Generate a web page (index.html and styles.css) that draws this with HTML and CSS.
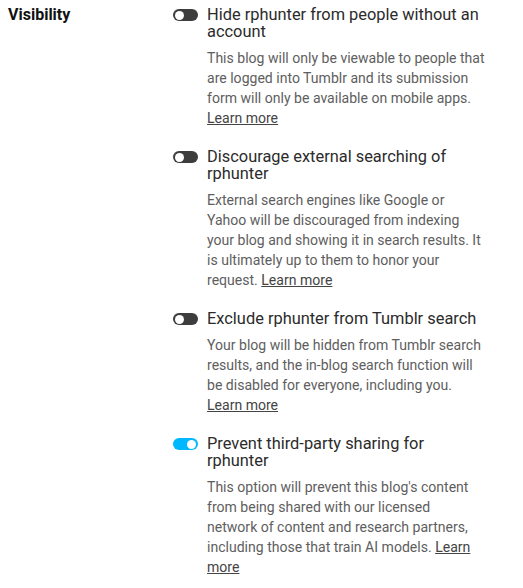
FILE: index.html
```html
<!DOCTYPE html>
<html lang="en">
<head>
    <meta charset="UTF-8">
    <title>Visibility</title>
    <link rel="stylesheet" href="styles.css">
</head>
<body>
<div class="section">
    <div class="label">Visibility</div>
    <div class="options">
        <div class="option">
            <span class="toggle"></span>
            <div class="text">
                <div class="title">Hide rphunter from people without an account</div>
                <div class="desc">This blog will only be viewable to people that are logged into Tumblr and its submission form will only be available on mobile apps. <a href="#">Learn more</a></div>
            </div>
        </div>
        <div class="option">
            <span class="toggle"></span>
            <div class="text">
                <div class="title">Discourage external searching of rphunter</div>
                <div class="desc">External search engines like Google or Yahoo will be discouraged from indexing your blog and showing it in search results. It is ultimately up to them to honor your request. <a href="#">Learn more</a></div>
            </div>
        </div>
        <div class="option">
            <span class="toggle"></span>
            <div class="text">
                <div class="title">Exclude rphunter from Tumblr search</div>
                <div class="desc">Your blog will be hidden from Tumblr search results, and the in-blog search function will be disabled for everyone, including you. <a href="#">Learn more</a></div>
            </div>
        </div>
        <div class="option">
            <span class="toggle on"></span>
            <div class="text">
                <div class="title">Prevent third-party sharing for rphunter</div>
                <div class="desc">This option will prevent this blog's content from being shared with our licensed<br>network of content and research partners, including those that train AI models. <a href="#">Learn more</a></div>
            </div>
        </div>
    </div>
</div>
</body>
</html>
```

FILE: styles.css
```css
body {
    margin: 0;
    background: #ffffff;
    font-family: Roboto, "Liberation Sans", sans-serif;
}

.section {
    display: flex;
    padding: 6px 0 0 8px;
}

.label {
    width: 165px;
    font-size: 16px;
    font-weight: bold;
    color: #111111;
    line-height: 18px;
}

.options {
    display: flex;
    flex-direction: column;
    gap: 20px;
}

.option {
    display: flex;
    gap: 9px;
}

.toggle {
    flex: none;
    position: relative;
    width: 25px;
    height: 12px;
    margin-top: 3px;
    border-radius: 6px;
    background: #3d3d3d;
}

.toggle::after {
    content: "";
    position: absolute;
    left: 2px;
    top: 1.5px;
    width: 9px;
    height: 9px;
    border-radius: 50%;
    background: #ffffff;
}

.toggle.on {
    background: #00b8ff;
}

.toggle.on::after {
    left: auto;
    right: 2px;
}

.text {
    width: 278.5px;
}

.title {
    font-size: 16.4px;
    line-height: 17px;
    color: #2b2b2b;
}

.desc {
    margin-top: 8px;
    font-size: 14.05px;
    line-height: 20px;
    color: #5e5e5e;
}

.desc a {
    color: #444444;
    text-decoration: underline;
}
```
